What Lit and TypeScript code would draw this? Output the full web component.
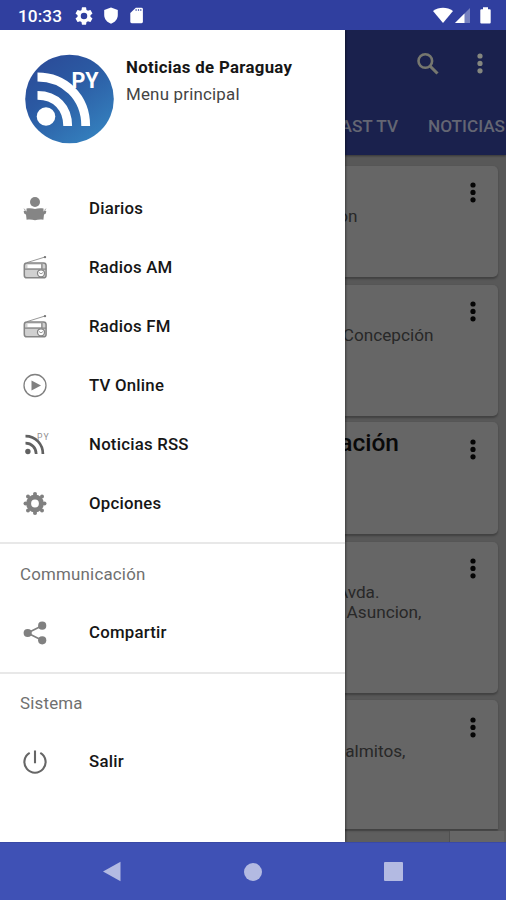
import { LitElement, html, css, svg } from "lit";
import { customElement, property } from "lit/decorators.js";

const GEAR =
  "M19.14 12.94c.04-.3.06-.61.06-.94s-.02-.64-.07-.94l2.03-1.58a.49.49 0 0 0 .12-.61l-1.92-3.32a.49.49 0 0 0-.59-.22l-2.39.96a7 7 0 0 0-1.62-.94l-.36-2.54a.48.48 0 0 0-.48-.41h-3.84a.47.47 0 0 0-.47.41l-.36 2.54c-.59.24-1.13.57-1.62.94l-2.39-.96a.48.48 0 0 0-.59.22L2.74 8.87a.47.47 0 0 0 .12.61l2.03 1.58c-.05.3-.09.63-.09.94s.02.64.07.94l-2.03 1.58a.49.49 0 0 0-.12.61l1.92 3.32c.12.22.37.29.59.22l2.39-.96c.5.38 1.03.7 1.62.94l.36 2.54c.05.24.24.41.48.41h3.84c.24 0 .44-.17.47-.41l.36-2.54c.59-.24 1.13-.56 1.62-.94l2.39.96c.22.08.47 0 .59-.22l1.92-3.32a.47.47 0 0 0-.12-.61l-2.01-1.58zM12 15.6a3.6 3.6 0 1 1 0-7.2 3.6 3.6 0 0 1 0 7.2z";

const radio = svg`
  <path d="M4 6.600 22 1" fill="none" stroke="#999" stroke-width="1"/><circle cx="22" cy="1.100" r="1.200" fill="#777"/>
  <rect x="1.300" y="7" width="21.800" height="14.800" rx="2.600" fill="#d0d0d0" stroke="#858585" stroke-width="1.500"/>
  <path d="M4.500 8.700h14v3.400h-14z" fill="#fff"/>
  <path d="M1.500 13.200h21.600M18.900 8v4.500" fill="none" stroke="#858585" stroke-width="1.300"/>
  <circle cx="18" cy="17.300" r="3.500" fill="#fff" stroke="#858585" stroke-width="1.300"/>
  <path d="m16 16.500 2 1.400 2-1.400" fill="none" stroke="#999" stroke-width="1"/>`;

const icons: Record<string, unknown> = {
  reader: svg`<g fill="#858585"><circle cx="12" cy="5" r="5"/>
    <path d="M3.500 11.500c3-.6 6-.3 8.500.5 2.500-.8 5.500-1.100 8.500-.5v3l1.500-1.200 1.400 1.200-.8 2.300-1.600.6-.6 5.300c-3-.5-5.800-.3-8.400.6-2.600-.9-5.400-1.100-8.400-.6l-.6-5.300-1.600-.6-.8-2.300 1.400-1.200 1.500 1.200z"/></g>
    <path d="m.8 11.800 1.800 1.400M23.200 11.800l-1.800 1.400" stroke="#aaa" fill="none"/>`,
  radio,
  play: svg`<circle cx="12" cy="11.500" r="11" fill="none" stroke="#808080" stroke-width="1.300"/><path d="M8.500 6.500v10l9.500-5z" fill="#808080"/>`,
  rss: svg`<g fill="none" stroke="#616161" stroke-width="2.700"><path d="M2.500 10.200c6 0 10.700 4.500 10.700 10.800M2.500 3.200c10.200 0 17.400 7.800 17.400 17.800"/></g>
    <circle cx="4.900" cy="18.500" r="2.700" fill="#616161"/><text x="14" y="7.300" font-size="8.600" fill="#8f8f8f" letter-spacing="1">PY</text>`,
  cog: svg`<g fill="#808080"><circle cx="12" cy="2" r="2"/><circle cx="12" cy="21" r="2"/><circle cx="2.500" cy="11.500" r="2"/><circle cx="21.500" cy="11.500" r="2"/><circle cx="5" cy="4.500" r="2"/><circle cx="19" cy="4.500" r="2"/><circle cx="5" cy="18.500" r="2"/><circle cx="19" cy="18.500" r="2"/></g>
    <circle cx="12" cy="11.500" r="6.400" stroke-width="5" fill="none" stroke="#808080"/>`,
  share: svg`<path d="M19 4.700 4.500 12 19 19.300" fill="none" stroke="#808080" stroke-width="1.700"/><g fill="#808080"><circle cx="19.200" cy="4.700" r="4.100"/><circle cx="4.700" cy="12" r="4.100"/><circle cx="19.200" cy="19.300" r="4.100"/></g>`,
  power: svg`<path d="M12 .600v12.600M6.700 2.900a10.600 10.600 0 1 0 10.600 0" fill="none" stroke="#666" stroke-width="2.100"/>`,
};

const dots = (color: string) => svg`<g fill=${color}><circle cx="4" cy="3" r="2.600"/><circle cx="4" cy="10.400" r="2.600"/><circle cx="4" cy="17.800" r="2.600"/></g>`;

@customElement("menu-row")
export class MenuRow extends LitElement {
  @property() icon = "";
  @property() label = "";
  static styles = css`
    :host { display: flex; align-items: center; height: 59.100px; padding-left: 23px; font-family: Roboto, sans-serif; }
    svg { width: 24px; height: 24px; overflow: visible; flex: none; }
    .label { margin: 0 0 1.400px 42px; font: 500 16.800px/20px Roboto, sans-serif; letter-spacing: .220px; color: #161616; white-space: nowrap; }
  `;
  render() {
    return html`<svg viewBox="0 0 24 24">${icons[this.icon]}</svg><span class="label">${this.label}</span>`;
  }
}

interface Line { text: string; end: number; title?: boolean }
interface Card { height: number; gap: number; top: number; more?: number; lines: Line[] }

const cards: Card[] = [
  { height: 111, gap: 8, top: 40, lines: [{ text: "on", end: 357.5 }] },
  { height: 131, gap: 6, top: 40, lines: [{ text: "Concepción", end: 433.5 }] },
  { height: 112, gap: 8, top: 8, more: 17, lines: [{ text: "ación", end: 399, title: true }] },
  { height: 151, gap: 7, top: 40, lines: [{ text: "Avda.", end: 379.5 }, { text: "Asuncion,", end: 421.5 }] },
  { height: 129, gap: 0, top: 41, more: 17, lines: [{ text: "almitos,", end: 405.5 }] },
];

@customElement("app-root")
export class AppRoot extends LitElement {
  static styles = css`
    :host { display: grid; grid-template-rows: 30px 812px 58px; width: 506px; height: 900px; overflow: hidden; font-family: Roboto, sans-serif; background: #fff; }
    svg { display: block; flex: none; overflow: visible; }
    .status { background: #303f9f; display: flex; align-items: center; color: #fff; padding: 1px 15px 0 18px; }
    .time { font: 500 17.200px/20px Roboto, sans-serif; letter-spacing: .100px; width: 57px; }
    .sysicons { display: flex; gap: 10px; align-items: center; flex: 1; }
    .signals { display: flex; align-items: center; }
    .stage { position: relative; overflow: hidden; background: #585858; }
    .bar { height: 125px; background: #1a214d; box-shadow: 0 1px 2px #0006; display: flex; flex-direction: column; }
    .tools { height: 67px; display: flex; justify-content: flex-end; align-items: center; gap: 37px; padding-right: 22px; }
    .tabs { height: 58px; display: flex; align-items: center; justify-content: flex-end; gap: 30px; padding-right: 1px; color: #646673; font: 500 17.200px/20px Roboto, sans-serif; white-space: nowrap; }
    .list { padding: 11px 8px 0; display: flex; flex-direction: column; }
    .card { background: #666; border-radius: 5px; box-shadow: 0 1.500px 2px #0004; display: flex; justify-content: flex-end; box-sizing: border-box; padding-right: 21px; flex: none; }
    .card:last-child { border-radius: 5px 5px 0 0; }
    .lines { display: flex; flex-direction: column; flex: 1; align-items: flex-end; }
    .line { font: 400 17.200px/20px Roboto, sans-serif; color: #282828; white-space: nowrap; }
    .title { font: 500 24.500px/26px Roboto, sans-serif; color: #090909; }
    .foot { display: flex; justify-content: flex-end; height: 11px; margin-top: 2px; background: #5e5e5e; }
    .cell { width: 54px; margin-right: 2px; background: #666; border-left: 1px solid #505050; }
    .drawer { position: absolute; left: 0; top: 0; bottom: 0; width: 345px; background: #fff; box-shadow: 1px 0 2px #0006; box-sizing: border-box; padding-top: 24px; }
    .head { display: flex; height: 125px; padding-left: 24px; gap: 12px; }
    .names { padding-top: 2px; white-space: nowrap; }
    .name { font: 700 16.800px/22px Roboto, sans-serif; letter-spacing: .320px; color: #161616; }
    .sub { font: 400 16.900px/22px Roboto, sans-serif; letter-spacing: .200px; color: #444; margin-top: 5px; }
    .group { height: 363px; }
    .section { border-top: 2px solid #e8e8e8; padding-top: 19px; height: 129.500px; box-sizing: border-box; }
    .section + .section { padding-top: 18.300px; }
    .section + .section menu-row { margin-top: 18.700px; }
    .heading { font: 400 16.900px/22px Roboto, sans-serif; letter-spacing: .200px; color: #707070; padding-left: 20px; }
    .section menu-row { margin-top: 18px; }
    .nav { background: #3f51b5; display: flex; align-items: center; padding-left: 102px; border-top: 1px solid #3949a6; box-sizing: border-box; }
    .circle { width: 18px; height: 18px; border-radius: 50%; background: #b3bae2; margin-left: 123px; }
    .square { width: 19px; height: 19px; border-radius: 1px; background: #b3bae2; margin-left: 122px; }
  `;

  render() {
    const rows = [["reader", "Diarios"], ["radio", "Radios AM"], ["radio", "Radios FM"], ["play", "TV Online"], ["rss", "Noticias RSS"], ["cog", "Opciones"]];
    return html`
      <div class="status">
        <span class="time">10:33</span>
        <div class="sysicons">
          <svg width="18" height="18" viewBox="2 2 20 20" fill="#fff"><path d=${GEAR} /></svg>
          <svg width="16" height="17" viewBox="0 0 16 17" fill="#fff"><path d="M8 .500 14.800 3v5c0 4-2.800 7.300-6.800 8.700C4 15.300 1.200 12 1.200 8V3z" /></svg>
          <svg width="14" height="17" viewBox="-1.500 0 14 17"><path d="M5.300.800H11a1.400 1.400 0 0 1 1.400 1.400v12.600a1.400 1.400 0 0 1-1.400 1.400H1.200a1.400 1.400 0 0 1-1.400-1.400V6z" fill="#fff" /><path d="M5.600 2v2M8 2v2M10.300 2v2" stroke="#6672b8" stroke-width="1.200" /></svg>
        </div>
        <div class="signals">
          <svg width="58" height="18" viewBox="0 0 58 18"><path d="M0 4C6-.300 14-.300 20 4L10 16z" fill="#fff" /><path d="M37 1v15H22z" fill="#7580bf" /><path d="M31.500 6.500V16H22z" fill="#fff" /><path d="M50 .300h5v2h1.700q1 0 1 1v12.200q0 1-1 1h-8.400q-1 0-1-1V3.300q0-1 1-1H50z" fill="#fff" /></svg>
        </div>
      </div>
      <div class="stage">
        <div class="bar">
          <div class="tools">
            <svg width="22" height="22" viewBox="0 0 22 22" fill="none" stroke="#76776f"><circle cx="8.300" cy="8" r="6.800" stroke-width="2.600" /><path d="m13 13 7.500 7.500" stroke-width="3.100" /></svg>
            <svg width="8" height="21" viewBox="0 0 8 21">${dots("#85877f")}</svg>
          </div>
          <div class="tabs"><span>PODCAST TV</span><span>NOTICIAS</span></div>
        </div>
        <div class="list">
          ${cards.map((c) => html`
            <div class="card" style="height:${c.height}px;margin-bottom:${c.gap}px">
              <div class="lines" style="padding-top:${c.top}px">
                ${c.lines.map((l) => html`<span class="line ${l.title ? "title" : ""}" style="margin-right:${469 - l.end}px">${l.text}</span>`)}
              </div>
              <svg style="margin-top:${c.more ?? 16}px" width="8" height="21" viewBox="0 0 8 21">${dots("#050505")}</svg>
            </div>`)}
        </div>
        <div class="foot"><div class="cell"></div></div>
        <div class="drawer">
          <div class="head">
            <svg width="90" height="90" viewBox="0 0 90 90">
              <defs><linearGradient id="sky" x1="0" y1="0" x2="0.700" y2="1"><stop offset="0" stop-color="#2b4896" /><stop offset=".45" stop-color="#2b59a2" /><stop offset="1" stop-color="#347fbd" /></linearGradient></defs>
              <circle cx="45.500" cy="45" r="44.300" fill="url(#sky)" />
              <g fill="none" stroke="#fff" stroke-width="8.800"><path d="M13.500 41.300c18.500 0 30.200 12.500 30.200 30.700M13.500 23c27 0 48.200 20 48.200 49" /></g>
              <circle cx="22" cy="62.500" r="9.300" fill="#fff" />
              <text x="47.500" y="34" font-size="21.500" font-weight="700" fill="#fff">PY</text>
            </svg>
            <div class="names"><div class="name">Noticias de Paraguay</div><div class="sub">Menu principal</div></div>
          </div>
          <div class="group">${rows.map(([i, l]) => html`<menu-row icon=${i} label=${l}></menu-row>`)}</div>
          <div class="section"><div class="heading">Communicación</div><menu-row icon="share" label="Compartir"></menu-row></div>
          <div class="section"><div class="heading">Sistema</div><menu-row icon="power" label="Salir"></menu-row></div>
        </div>
      </div>
      <div class="nav">
        <svg width="19" height="21" viewBox="0 0 19 21"><path d="M18.500.800v19.400L1 10.500z" fill="#b3bae2" /></svg>
        <div class="circle"></div><div class="square"></div>
      </div>`;
  }
}
